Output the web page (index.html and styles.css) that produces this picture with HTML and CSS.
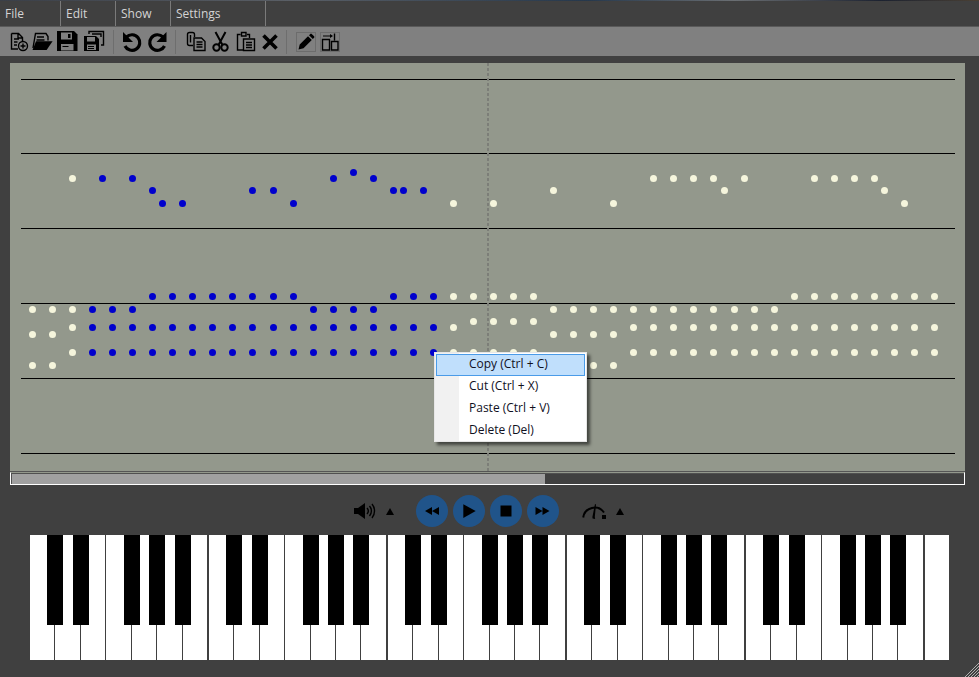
FILE: index.html
```html
<!DOCTYPE html>
<html>
<head>
	<title>Piano Roll</title>
	<meta charset="utf-8" />
	<link rel="stylesheet" href="styles.css">
</head>
<body>
	<div class="strip"></div>

	<div class="menubar">
		<div class="menu-item menu-file">File</div>
		<div class="menu-item menu-edit">Edit</div>
		<div class="menu-item menu-show">Show</div>
		<div class="menu-item menu-settings">Settings</div>
	</div>

	<div class="toolbar">
		<!-- new -->
		<svg class="tool" viewBox="0 0 25 24"><path class="ln" d="M5.500 3.500h7l4 4v4M5.500 3.500v15.500h6.500M12 3.500v4.500h4.500M8 9h5M8 12h3.500M8 15h3"/><circle class="ln" cx="17" cy="16" r="4.500"/><path class="ln" d="M17 13.500v5M14.500 16h5"/></svg>
		<!-- open -->
		<svg class="tool" viewBox="0 0 25 24"><path class="ln" d="M2 18L4.500 3.500h10.500l2 3v4M6 7h7M5.500 10h8"/><path class="fl" d="M5 11.300h16.600l-6 8.700H1.500z"/></svg>
		<!-- save -->
		<svg class="tool" viewBox="0 0 25 24"><path class="fl" d="M1 1h17l3.500 3.500V21H1z"/><path class="hole" d="M5 2.500h11v7H5zM5 14h12.500v6.500H5z"/><path class="fl" d="M12 4h2.500v4H12zM6.500 16h6v1h-6z"/></svg>
		<!-- save all -->
		<svg class="tool" viewBox="0 0 25 24"><path class="ln" d="M8 4V1.500h14.500v13.500h-2.500M11 4h9v3"/><path class="fl" d="M3 6h12l3 3v12H3z"/><path class="hole" d="M6 7h8v4.500H6zM6 14.500h9V20H6z"/><path class="fl" d="M7 16h6v1H7zM7 18h6v1H7z"/></svg>
		<div class="sep sep-a"></div>
		<!-- undo -->
		<svg class="tool" viewBox="0 0 25 24"><path class="thick" d="M6.500 7A7.800 7.800 0 1 1 5 16"/><path class="fl" d="M3 2v10h10z"/></svg>
		<!-- redo -->
		<svg class="tool" viewBox="0 0 25 24"><path class="thick" d="M18 7A7.800 7.800 0 1 0 19.500 16"/><path class="fl" d="M21.500 2v10h-10z"/></svg>
		<div class="sep sep-b"></div>
		<!-- copy -->
		<svg class="tool" viewBox="0 0 25 24"><path class="ln" d="M10 15.500H6.500a2 2 0 0 1-2-2V4.500a2 2 0 0 1 2-2h3a2 2 0 0 1 2 2v2.500M7.500 5v7.500"/><path class="ln" d="M11 8h7.500l3.500 3.500v9H11zM13.500 12h6M13.500 14.500h6M13.500 17h6"/></svg>
		<!-- cut -->
		<svg class="tool" viewBox="0 0 25 24"><path class="ln2" d="M7.500 2l7 13M17.500 2l-7 13"/><circle class="ln2" cx="8.500" cy="17.500" r="3.200"/><circle class="ln2" cx="16.500" cy="17.500" r="3.200"/></svg>
		<!-- paste -->
		<svg class="tool" viewBox="0 0 25 24"><path class="ln" d="M7.500 4.500h-3v15.500h6M14 4.500h2.500V8M8.500 2.500h4.500v3.500H8.500z"/><path class="ln" d="M10.500 9h11v11.500h-11zM13 12.500h6M13 15h6M13 17.500h6"/></svg>
		<!-- delete -->
		<svg class="tool" viewBox="0 0 25 24"><path class="cross" d="M5.500 5.500l13 13M18.500 5.500l-13 13"/></svg>
		<div class="sep sep-c"></div>
		<!-- pencil -->
		<svg class="tool-box" viewBox="1 1 18 18"><path class="fl" d="M2.500 17.500l1.200-5L12 4.200 15.800 8l-8.300 8.300zM13 3.200l1.300-1.300a1 1 0 0 1 1.400 0l2.400 2.400a1 1 0 0 1 0 1.400L16.800 7z"/></svg>
		<!-- columns -->
		<svg class="tool-box tool-box-b" viewBox="1 1 18 18"><path class="ln" d="M2.500 7.500h7v10.500h-7zM11.500 9.500h6.500v8.500h-6.500zM14.500 1.500v7"/><path class="fl" d="M3 3.500h7V2l3 2-3 2V4.500H3z"/></svg>
	</div>

	<div class="score">
		<svg class="roll" viewBox="10 63 955 408">
			<path class="staff" d="M21 79.500h934M21 153.500h934M21 228.500h934M21 303.500h934M21 378.500h934M21 453.500h934"/>
			<path class="cursor" d="M488 63v408"/>
			<g class="notes notes-done">
				<path d="M353.500 172.500h0"/>
				<path d="M102.500 178.500h0m30 0h0m201 0h0m40 0h0"/>
				<path d="M152.500 190.500h0m100 0h0m21 0h0m120 0h0m10 0h0m20 0h0"/>
				<path d="M162.500 203.500h0m20 0h0m111 0h0"/>
				<path d="M152.500 296.500h0m20 0h0m20 0h0m20 0h0m20 0h0m20 0h0m21 0h0m20 0h0m100 0h0m20 0h0m20 0h0"/>
				<path d="M92.500 309.500h0m20 0h0m20 0h0m181 0h0m20 0h0m20 0h0m20 0h0"/>
				<path d="M92.500 327.500h0m20 0h0m20 0h0m20 0h0m20 0h0m20 0h0m20 0h0m20 0h0m20 0h0m21 0h0m20 0h0m20 0h0m20 0h0m20 0h0m20 0h0m20 0h0m20 0h0m20 0h0"/>
				<path d="M92.500 352.500h0m20 0h0m20 0h0m20 0h0m20 0h0m20 0h0m20 0h0m20 0h0m20 0h0m21 0h0m20 0h0m20 0h0m20 0h0m20 0h0m20 0h0m20 0h0m20 0h0m20 0h0"/>
			</g>
			<g class="notes notes-todo">
				<path d="M72.500 178.500h0m581 0h0m20 0h0m20 0h0m20 0h0m31 0h0m70 0h0m20 0h0m20 0h0m20 0h0"/>
				<path d="M553.500 190.500h0m171 0h0m160 0h0"/>
				<path d="M453.500 203.500h0m40 0h0m120 0h0m291 0h0"/>
				<path d="M453.500 296.500h0m20 0h0m20 0h0m20 0h0m20 0h0m261 0h0m20 0h0m20 0h0m20 0h0m20 0h0m20 0h0m20 0h0m20 0h0"/>
				<path d="M32.500 309.500h0m20 0h0m20 0h0m481 0h0m20 0h0m20 0h0m20 0h0m20 0h0m20 0h0m20 0h0m20 0h0m20 0h0m21 0h0m20 0h0m20 0h0"/>
				<path d="M473.500 321.500h0m20 0h0m20 0h0m20 0h0"/>
				<path d="M72.500 327.500h0m381 0h0m180 0h0m20 0h0m20 0h0m20 0h0m20 0h0m21 0h0m20 0h0m20 0h0m20 0h0m20 0h0m20 0h0m20 0h0m20 0h0m20 0h0m20 0h0m20 0h0"/>
				<path d="M32.500 334.500h0m20 0h0m501 0h0m20 0h0m20 0h0m20 0h0"/>
				<path d="M72.500 352.500h0m381 0h0m20 0h0m20 0h0m20 0h0m20 0h0m100 0h0m20 0h0m20 0h0m20 0h0m20 0h0m21 0h0m20 0h0m20 0h0m20 0h0m20 0h0m20 0h0m20 0h0m20 0h0m20 0h0m20 0h0m20 0h0"/>
				<path d="M32.500 365.500h0m20 0h0m541 0h0m20 0h0"/>
			</g>
		</svg>
	</div>

	<div class="scroll">
		<div class="scroll-track"><div class="scroll-thumb"></div></div>
	</div>

	<div class="controls">
		<svg class="speaker" viewBox="0 0 23 16"><path class="fl" d="M1 5h4l7-5v16l-7-5H1z"/><path class="ln" d="M14 5a4.500 4.500 0 0 1 0 6M16.500 3a7.500 7.500 0 0 1 0 10M19 1a11 11 0 0 1 0 14"/></svg>
		<div class="caret caret-vol"></div>
		<div class="round"><svg viewBox="0 0 32 32"><path class="fl" d="M9 16l7-4v8zM16 16l7-4v8z"/></svg></div>
		<div class="round"><svg viewBox="0 0 32 32"><path class="fl" d="M10.300 9.300L22.700 16l-12.400 7z"/></svg></div>
		<div class="round"><svg viewBox="0 0 32 32"><path class="fl" d="M10.500 10.500h11v11h-11z"/></svg></div>
		<div class="round"><svg viewBox="0 0 32 32"><path class="fl" d="M8.500 12l7 4-7 4zM15.500 12l7 4-7 4z"/></svg></div>
		<svg class="gauge" viewBox="0 0 25 16"><path class="arc" d="M1.200 14.500A11.500 11.500 0 0 1 22 9.500"/><path class="fl" d="M13 1l1 0.400-1.200 12.600 0.400 2-2.600-0.500-0.200-1.500zM20 12h4v4h-4z"/></svg>
		<div class="caret caret-speed"></div>
	</div>

	<div class="keyboard">
		<div class="key sharp"></div><div class="key sharp"></div><div class="key"></div><div class="key sharp"></div><div class="key sharp"></div><div class="key sharp"></div><div class="key octave"></div>
		<div class="key sharp"></div><div class="key sharp"></div><div class="key"></div><div class="key sharp"></div><div class="key sharp"></div><div class="key sharp"></div><div class="key octave"></div>
		<div class="key sharp"></div><div class="key sharp"></div><div class="key"></div><div class="key sharp"></div><div class="key sharp"></div><div class="key sharp"></div><div class="key octave"></div>
		<div class="key sharp"></div><div class="key sharp"></div><div class="key"></div><div class="key sharp"></div><div class="key sharp"></div><div class="key sharp"></div><div class="key octave"></div>
		<div class="key sharp"></div><div class="key sharp"></div><div class="key"></div><div class="key sharp"></div><div class="key sharp"></div><div class="key sharp"></div><div class="key octave"></div>
		<div class="key last"></div>
	</div>

	<div class="context">
		<div class="context-item active">Copy (Ctrl + C)</div>
		<div class="context-item">Cut (Ctrl + X)</div>
		<div class="context-item">Paste (Ctrl + V)</div>
		<div class="context-item">Delete (Del)</div>
	</div>

	<svg class="grip" viewBox="0 0 14 15"><path d="M0 15L14 1M3 15L14 4M6 15l8-8M9 15l5-5M12 15l2-2"/></svg>
</body>
</html>
```

FILE: styles.css
```css
html, body {
    margin: 0;
    height: 100%;
    overflow: hidden;
}
body {
    background: #404040;
    font-family: "Open Sans", "Noto Sans", sans-serif;
    font-size: 12px;
}

.strip {
    height: 1px;
    background: linear-gradient(to right, #3a3f48, #5a5f66 30%, #26384c 60%, #6a6e72 75%, #1c2230 90%, #4a4034);
}

/* menu */
.menubar {
    display: flex;
    height: 25px;
    border-bottom: 1px solid #5a5a5a;
}
.menu-item {
    box-sizing: border-box;
    padding-left: 5px;
    line-height: 25px;
    color: #d4d4d4;
    border-right: 1px solid #7a7a7a;
}
.menu-file { width: 61px; }
.menu-edit { width: 55px; }
.menu-show { width: 55px; }
.menu-settings { width: 95px; }

/* toolbar */
.toolbar {
    display: flex;
    align-items: center;
    height: 29px;
    padding-left: 6px;
    background: #808080;
}
.tool {
    width: 25px;
    height: 24px;
    flex: none;
}
.tool-box {
    box-sizing: border-box;
    width: 20px;
    height: 20px;
    border: 1px solid #6c6c6c;
    flex: none;
}
.tool-box-b { margin-left: 4px; }
.sep {
    width: 1px;
    height: 24px;
    background: #6e6e6e;
}
.sep-a { margin: 0 6px 0 7px; }
.sep-b { margin: 0 7px 0 5px; }
.sep-c { margin: 0 9px 0 3px; }

.ln { fill: none; stroke: #000; stroke-width: 1.4; }
.ln2 { fill: none; stroke: #000; stroke-width: 2; }
.arc { fill: none; stroke: #000; stroke-width: 2; }
.fl { fill: #000; }
.hole { fill: #808080; }
.thick { fill: none; stroke: #000; stroke-width: 3.2; }
.cross { fill: none; stroke: #000; stroke-width: 3.6; }

/* piano roll */
.score {
    box-sizing: border-box;
    width: 955px;
    height: 409px;
    margin: 7px 0 0 10px;
    background: #93988c;
    border-bottom: 1px solid #555;
}
.roll {
    display: block;
    width: 955px;
    height: 408px;
}
.staff { stroke: #000; stroke-width: 1; fill: none; }
.cursor { stroke: #7c7e78; stroke-width: 2; stroke-dasharray: 3 2; fill: none; }
.notes path {
    fill: none;
    stroke-width: 7;
    stroke-linecap: round;
}
.notes-done path { stroke: #0000cd; }
.notes-todo path { stroke: #f5f5dc; }

.scroll {
    box-sizing: border-box;
    width: 955px;
    height: 13px;
    margin-left: 10px;
    border: 1px solid #fff;
    border-top-color: #93988c;
}
.scroll-track {
    box-sizing: border-box;
    height: 100%;
    border-top: 1px solid #505050;
    border-left: 1px solid #505050;
}
.scroll-thumb {
    width: 533px;
    height: 100%;
    background: #a0a0a0;
}

/* transport */
.controls {
    display: flex;
    align-items: center;
    justify-content: center;
    gap: 5px;
    height: 32px;
    margin-top: 10px;
    padding-right: 2px;
}
.speaker { width: 23px; height: 16px; }
.gauge { width: 25px; height: 16px; margin-left: 18px; }
.caret {
    width: 0;
    height: 0;
    border-left: 4px solid transparent;
    border-right: 4px solid transparent;
    border-bottom: 7px solid #000;
}
.caret-vol { margin: 0 17px 0 5px; }
.caret-speed { margin-left: 4px; }
.round {
    width: 32px;
    height: 32px;
    border-radius: 50%;
    background: #20548a;
}
.round svg { display: block; }

/* keyboard */
.keyboard {
    display: flex;
    width: 919px;
    height: 125px;
    margin: 8px 0 0 30px;
}
.key {
    position: relative;
    flex: 1;
    background: #fff;
    border-right: 1px solid #404040;
}
.key.octave { border-right-width: 2px; }
.key.last { border-right: 0; }
.key.sharp::after {
    content: "";
    position: absolute;
    top: 0;
    right: -9px;
    width: 16px;
    height: 90px;
    background: #000;
    z-index: 1;
}

/* right click menu */
.context {
    position: absolute;
    left: 434px;
    top: 352px;
    box-sizing: border-box;
    width: 153px;
    height: 90px;
    padding: 1px;
    background: linear-gradient(to right, #f1f1f1 24px, #fff 24px);
    border: 1px solid #e6e6e6;
    box-shadow: 3px 3px 3px rgba(0, 0, 0, 0.55);
    z-index: 2;
}
.context-item {
    box-sizing: border-box;
    height: 22px;
    padding-left: 33px;
    line-height: 20px;
    color: #10101e;
}
.context-item.active {
    background: #c0dffc;
    outline: 1px solid #4a9be8;
    outline-offset: -1px;
}

.grip {
    position: absolute;
    right: 0;
    bottom: 0;
    width: 14px;
    height: 15px;
}
.grip path { stroke: #b0b0b0; stroke-width: 1; fill: none; }
```
